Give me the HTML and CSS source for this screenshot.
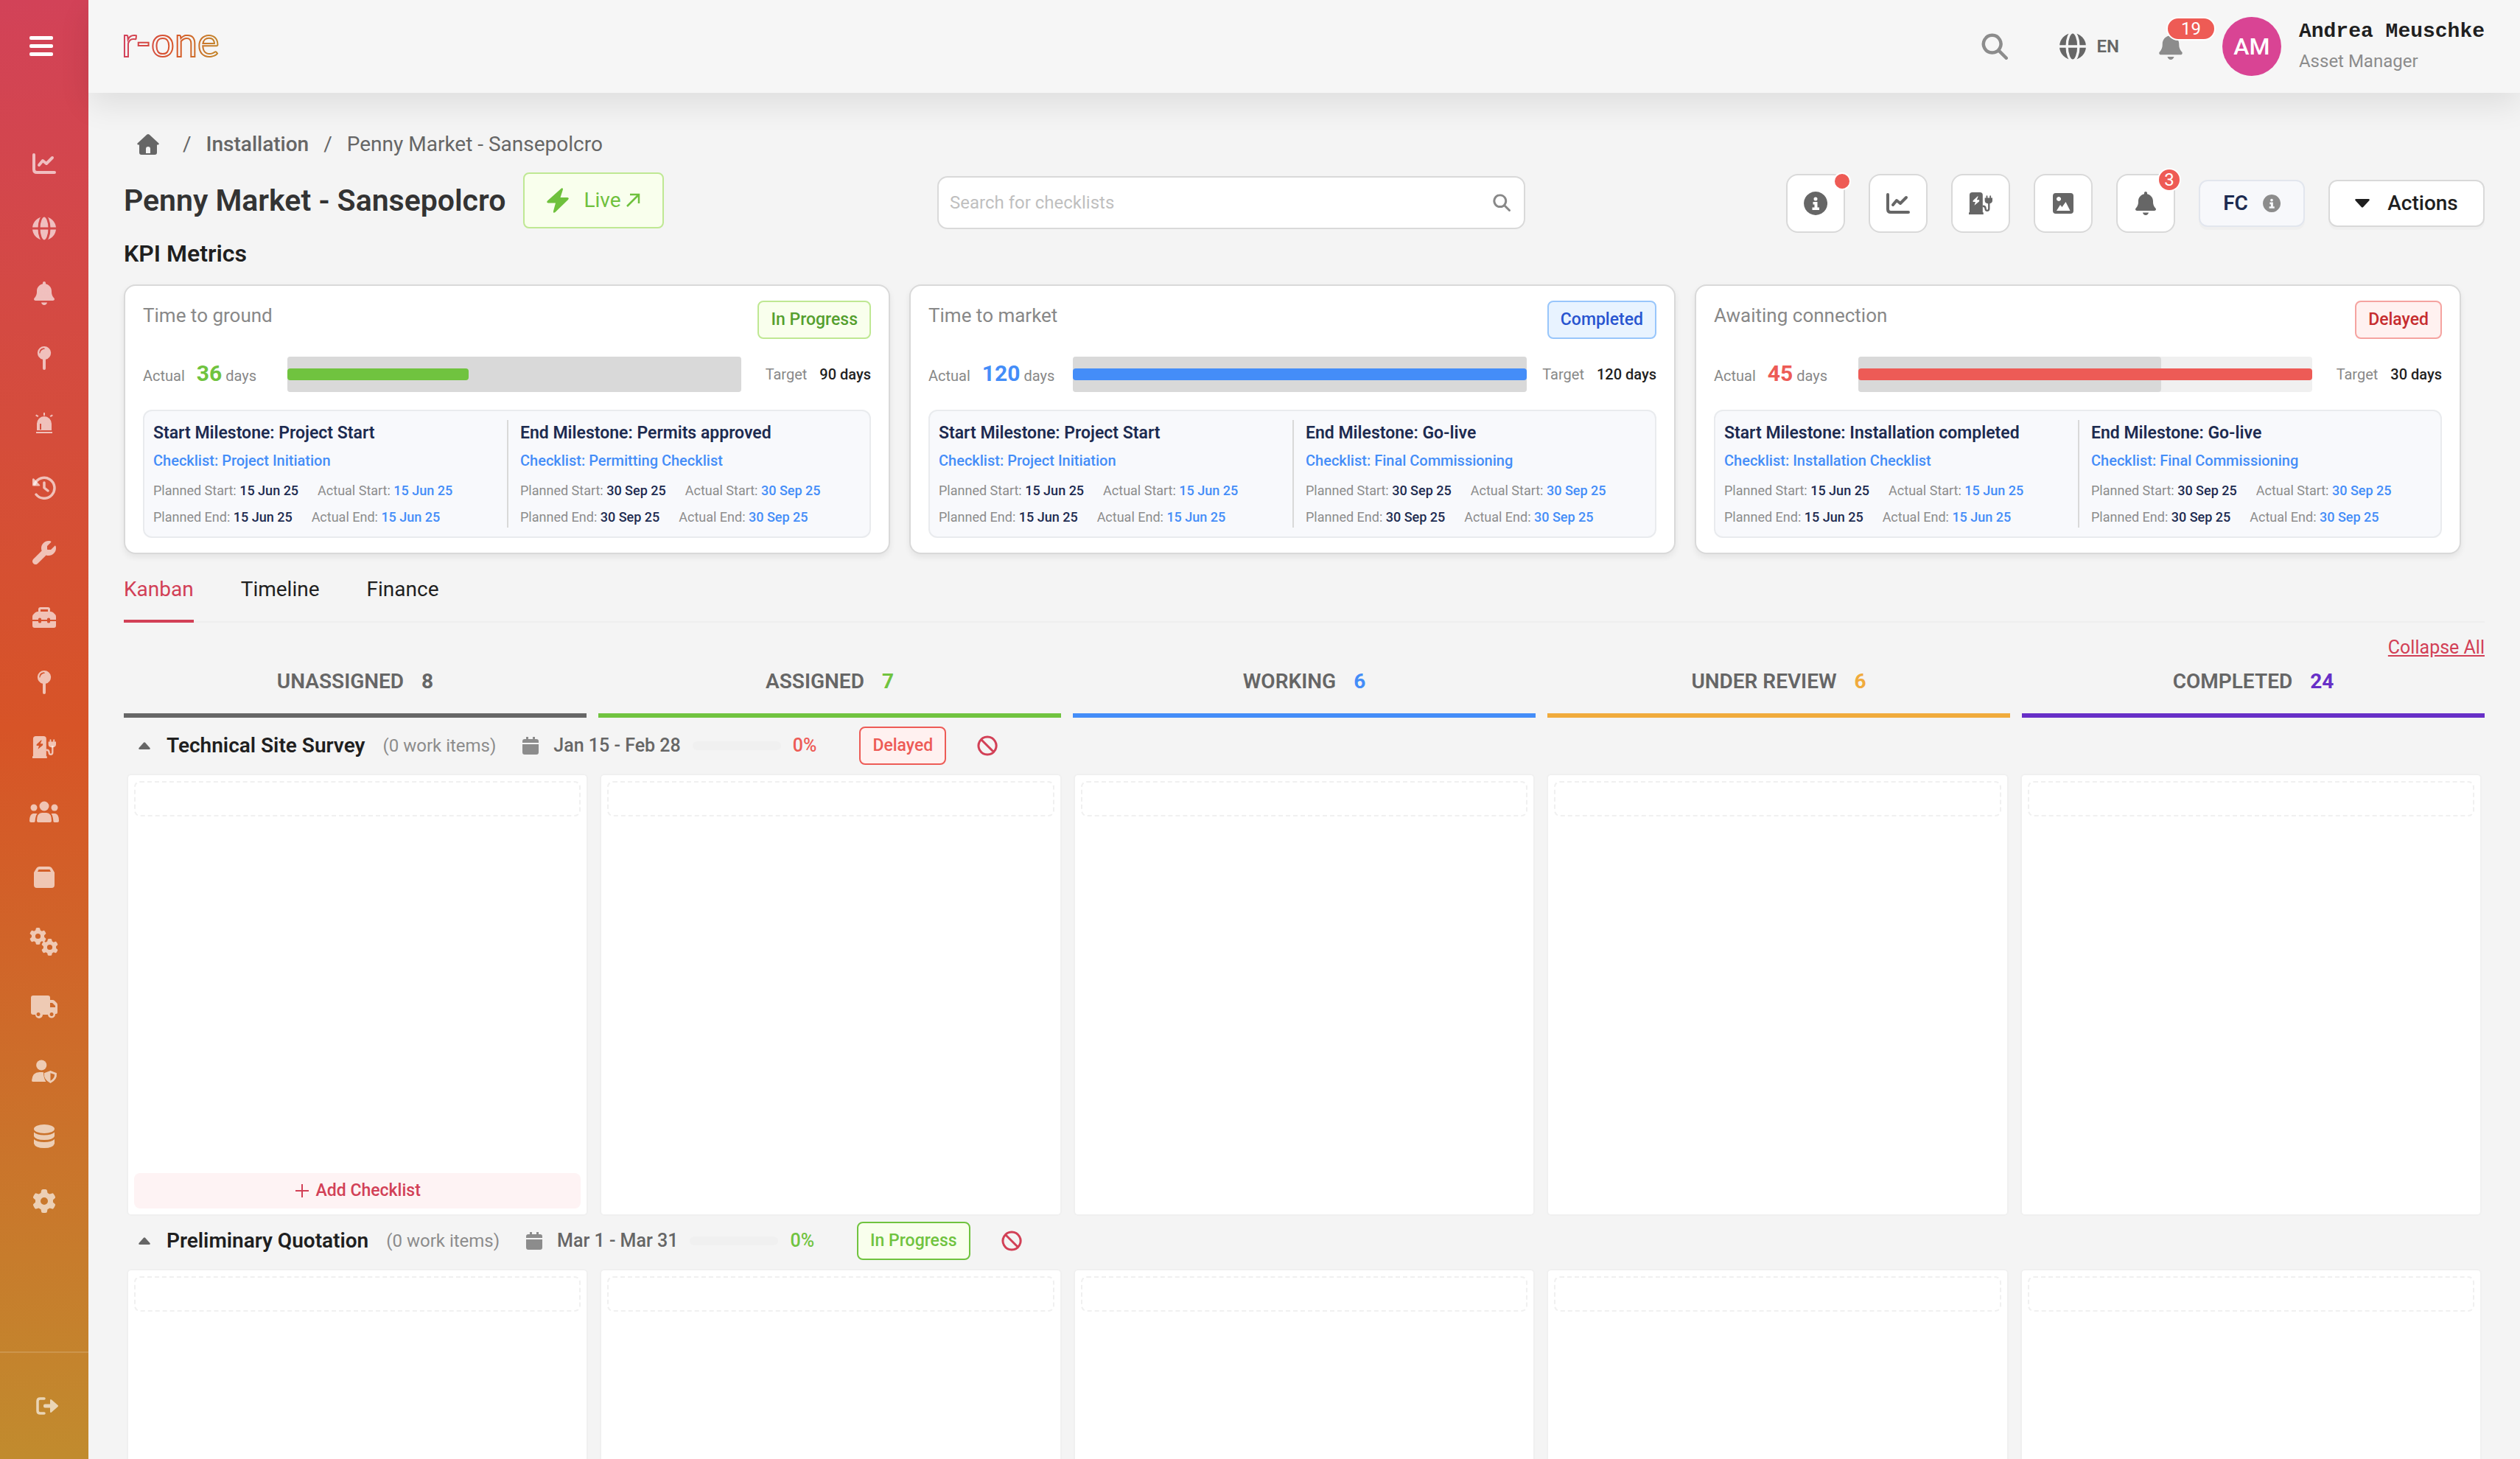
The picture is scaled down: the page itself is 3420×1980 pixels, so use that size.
FILE: index.html
```
<!DOCTYPE html>
<html lang="en">
<head>
  <meta charset="UTF-8">
  <meta name="viewport" content="width=device-width, initial-scale=1.0">
  <title>Penny Market - Sansepolcro</title>
  <link rel="stylesheet" href="styles.css">
</head>
<body>
  <!-- Icon sprite -->
  <svg class="sprite" aria-hidden="true">
    <symbol id="i-chart" viewBox="0 0 32 32">
      <path d="M2 4v20q0 4 4 4h24M9 18l5-6 5 4 8-8" fill="none" stroke="currentColor" stroke-width="4" stroke-linecap="round" stroke-linejoin="round"/>
    </symbol>
    <symbol id="i-globe" viewBox="0 0 32 32">
      <mask id="globe-lines">
        <rect width="32" height="32" fill="#fff"/>
        <ellipse cx="16" cy="16" rx="7" ry="17" fill="none" stroke="#000" stroke-width="3"/>
        <path d="M0 16h32" stroke="#000" stroke-width="3"/>
      </mask>
      <circle cx="16" cy="16" r="16" mask="url(#globe-lines)"/>
    </symbol>
    <symbol id="i-bell" viewBox="0 0 448 512">
      <path d="M224 0c-17.7 0-32 14.3-32 32V51.2C119 66 64 130.6 64 208v18.8c0 47-17.3 92.4-48.5 127.6l-7.4 8.3c-8.4 9.4-10.4 22.9-5.3 34.4S19.4 416 32 416H416c12.6 0 24-7.4 29.2-18.9s3.1-25-5.3-34.4l-7.4-8.3C401.3 319.2 384 273.9 384 226.8V208c0-77.4-55-142-128-156.8V32c0-17.7-14.3-32-32-32zM160 456c8 34 30 56 64 56s56-22 64-56z"/>
    </symbol>
    <symbol id="i-pin" viewBox="0 0 32 32">
      <path fill-rule="evenodd" d="M16 0a9 9 0 0 1 2 17.8V30q0 2-2 2t-2-2V17.800A9 9 0 0 1 16 0zM10.500 9q.8-4.500 6-5.200.8-1.300-1.200-1.500Q9.500 3 9.300 9q.6 1 1.200 0z"/>
    </symbol>
    <symbol id="i-alarm" viewBox="0 0 32 32">
      <path fill-rule="evenodd" d="M6 26V17a10 10 0 0 1 20 0v9zM10 25h2v-8h-2zM5 28h22v2H5zM15 2h2v4h-2zM4 6l1.500-1.500 3 2L7 8zM28 6l-1.500-1.500-3 2L25 8z"/>
    </symbol>
    <symbol id="i-history" viewBox="0 0 32 32">
      <path d="M3 11A14 14 0 1 1 5 25M16 9v7l5 4" fill="none" stroke="currentColor" stroke-width="3.500" stroke-linecap="round" stroke-linejoin="round"/>
      <path d="M0 4.500v8q0 1 1 1h8.500q1.500-.5.500-1.500L2 3.500q-1.600-1-2 1z"/>
    </symbol>
    <symbol id="i-wrench" viewBox="0 0 512 512">
      <path d="M352 320c88.400 0 160-71.600 160-160c0-15.300-2.200-30.100-6.200-44.200c-3.100-10.800-16.400-13.200-24.300-5.300l-76.800 76.800c-3 3-7.100 4.700-11.300 4.700H336c-8.800 0-16-7.200-16-16V118.600c0-4.200 1.700-8.300 4.700-11.300l76.800-76.800c7.900-7.900 5.400-21.200-5.300-24.300C382.100 2.200 367.300 0 352 0C263.600 0 192 71.600 192 160c0 19.100 3.400 37.500 9.500 54.500L19.900 396.100C7.200 408.800 0 426.100 0 444.100C0 481.600 30.400 512 67.900 512c18 0 35.300-7.200 48-19.900L297.500 310.500c17 6.200 35.400 9.500 54.500 9.500z"/>
    </symbol>
    <symbol id="i-toolbox" viewBox="0 0 32 32">
      <path fill-rule="evenodd" d="M8 8V5q0-3 3-3h10q3 0 3 3v3h1q2 0 3.500 1.500L31 12q1 1 1 3v4h-8v-1q0-1.500-2-1.500T20 18v1h-8v-1q0-1.500-2-1.500T8 18v1H0v-4q0-2 1-3l2.500-2.500Q5 8 7 8zM11 8h10V5H11zM0 21h8v1q0 1.500 2 1.500t2-1.500v-1h8v1q0 1.500 2 1.500t2-1.500v-1h8v6q0 3-3 3H3q-3 0-3-3z"/>
    </symbol>
    <symbol id="i-charge" viewBox="0 0 34 32">
      <path fill-rule="evenodd" d="M1 4q0-4 4-4h11q4 0 4 4v25h1v3H0v-3h1zM12.500 6L6 12v2h3.500L8 19l7-6v-2h-3.500L13.500 6z"/>
      <path d="M20 20q4 0 4 3.500 0 3 2.500 3t2.500-3V14" fill="none" stroke="currentColor" stroke-width="2.500"/>
      <path d="M25 5q1-1 2 0v3h3V5q1-1 2 0v3h2v4q0 4-5.500 4.500Q23 16 23 12V8h2z"/>
    </symbol>
    <symbol id="i-users" viewBox="0 0 40 32">
      <circle cx="20" cy="8" r="6.500"/><circle cx="6" cy="10" r="4.500"/><circle cx="34" cy="10" r="4.500"/>
      <path d="M10 28q0-11 7-11h6q7 0 7 11 0 2-2 2H12q-2 0-2-2zM0 28q0-9 5-10h4q1 0 1.500.5Q8 21 7.500 29q0 1-2 1H2q-2 0-2-2zM40 28q0-9-5-10h-4q-1 0-1.500.5 2.500 2.500 3 10.500 0 1 2 1H38q2 0 2-2z"/>
    </symbol>
    <symbol id="i-box" viewBox="0 0 32 32">
      <path fill-rule="evenodd" d="M2 10l3-5q1.500-3 5-3h12q3.500 0 5 3l3 5v17q0 4-4 4H6q-4 0-4-4zM7 9h18l-1.500-3H8.500z"/>
    </symbol>
    <symbol id="i-gear" viewBox="0 0 512 512">
      <path d="M495.900 166.600c3.200 8.700 .5 18.400-6.400 24.600l-43.300 39.400c1.100 8.300 1.700 16.800 1.700 25.400s-.6 17.100-1.700 25.400l43.300 39.400c6.900 6.200 9.600 15.900 6.400 24.600c-4.400 11.900-9.700 23.300-15.800 34.300l-4.700 8.100c-6.600 11-14 21.400-22.100 31.200c-5.900 7.200-15.700 9.600-24.500 6.800l-55.700-17.700c-13.400 10.300-28.200 18.900-44 25.400l-12.500 57.100c-2 9.100-9 16.300-18.200 17.800c-13.800 2.300-28 3.500-42.500 3.500s-28.700-1.200-42.500-3.500c-9.200-1.500-16.200-8.700-18.200-17.800l-12.500-57.100c-15.800-6.500-30.600-15.100-44-25.400L83.100 425.900c-8.800 2.800-18.600 .3-24.500-6.800c-8.100-9.800-15.500-20.200-22.100-31.200l-4.700-8.100c-6.100-11-11.400-22.400-15.800-34.300c-3.200-8.700-.5-18.400 6.400-24.600l43.300-39.400C64.600 273.100 64 264.600 64 256s.6-17.100 1.700-25.400L22.400 191.200c-6.900-6.200-9.600-15.900-6.400-24.600c4.400-11.900 9.700-23.300 15.800-34.300l4.700-8.100c6.600-11 14-21.400 22.100-31.200c5.900-7.200 15.700-9.600 24.500-6.800l55.700 17.700c13.400-10.300 28.200-18.900 44-25.400l12.500-57.100c2-9.100 9-16.300 18.200-17.800C227.300 1.200 241.500 0 256 0s28.700 1.200 42.500 3.500c9.200 1.500 16.200 8.700 18.200 17.800l12.500 57.100c15.800 6.500 30.600 15.100 44 25.400l55.700-17.700c8.800-2.800 18.600-.3 24.500 6.800c8.100 9.800 15.500 20.200 22.100 31.200l4.700 8.100c6.100 11 11.400 22.400 15.800 34.300zM256 336a80 80 0 1 0 0-160 80 80 0 1 0 0 160z"/>
    </symbol>
    <symbol id="i-gears" viewBox="0 0 40 40">
      <use href="#i-gear" x="0" y="1" width="23" height="23"/>
      <use href="#i-gear" x="16" y="16" width="23" height="23"/>
    </symbol>
    <symbol id="i-truck" viewBox="0 0 36 32">
      <path fill-rule="evenodd" d="M0 4q0-3 3-3h20q3 0 3 3v3h3q2 0 3 1l3 3q1 1 1 3v10q0 2-2 2h-1a5 5 0 0 1-10 1h-7a5 5 0 0 1-10 0H3q-3 0-3-3zM26 11v6h7v-2l-4-4zM10 24a2.500 2.500 0 1 0 .1 0zM28 24a2.500 2.500 0 1 0 .1 0z"/>
    </symbol>
    <symbol id="i-usershield" viewBox="0 0 36 34">
      <circle cx="14" cy="8" r="7.500"/>
      <path d="M0 30q1-12 11-12h4q1 0 2 .3 0 8 3.500 13.700H2q-2 0-2-2z"/>
      <path fill-rule="evenodd" d="M27 16l9 3.500q1 10-9 14.500-10-4.500-9-14.500zM27 19.500v11q6-3.500 6-9z"/>
    </symbol>
    <symbol id="i-database" viewBox="0 0 32 32">
      <ellipse cx="16" cy="6" rx="14" ry="6"/>
      <path d="M2 10.500q4 4 14 4t14-4V16q-2 5-14 5T2 16zM2 20q4 4 14 4t14-4v6q-2 6-14 6T2 26z"/>
    </symbol>
    <symbol id="i-logout" viewBox="0 0 32 32">
      <path d="M13 6H7.500Q4 6 4 9.500v13Q4 26 7.500 26H13" fill="none" stroke="currentColor" stroke-width="3.500" stroke-linecap="round"/>
      <path d="M14 13.500h7V8.500q0-2.500 2-1L31.500 15q1 1 0 2L23 24.500q-2 1.500-2-1v-5h-7q-2 0-2-2v-1q0-2 2-2z"/>
    </symbol>
    <symbol id="i-search" viewBox="0 0 32 32">
      <path d="M13 2.500a10.500 10.500 0 1 0 .1 0zM21 21l9 9" fill="none" stroke="currentColor" stroke-width="4" stroke-linecap="round"/>
    </symbol>
    <symbol id="i-home" viewBox="0 0 30 28">
      <path fill-rule="evenodd" d="M13.500.6q1.500-1.200 3 0L29.500 12.500q.8 1.500-1 2H27V25q0 3-3 3H6q-3 0-3-3V14.500H1.500q-1.800-.5-1-2zM12 26h6v-6q0-3-3-3t-3 3z"/>
    </symbol>
    <symbol id="i-bolt" viewBox="0 0 30 34">
      <path d="M20 .5q2-1 2 1.500L18.500 13H28q3 .5 1 3L11.500 33q-3 2-2.500-1.500L12 20.500H2q-3-.5-1-3z"/>
    </symbol>
    <symbol id="i-info" viewBox="0 0 32 32">
      <path fill-rule="evenodd" d="M16 0a16 16 0 1 0 .1 0zM13.500 10a2.500 2.500 0 1 1 5 0 2.500 2.500 0 0 1-5 0zM12.500 14h6v7.500H21V25h-9.500v-3.500h3v-4h-2z"/>
    </symbol>
    <symbol id="i-image" viewBox="0 0 28 28">
      <path fill-rule="evenodd" d="M4 0h20q4 0 4 4v20q0 4-4 4H4q-4 0-4-4V4q0-4 4-4zM8 5a3 3 0 1 0 .1 0zM5 24h18.500l-6-12-5 7-2.500-3z"/>
    </symbol>
    <symbol id="i-calendar" viewBox="0 0 22 24">
      <path d="M0 8V6q0-3 3-3h2V0h3v3h6V0h3v3h2q3 0 3 3v2zM0 10h22v11q0 3-3 3H3q-3 0-3-3z"/>
    </symbol>
    <symbol id="i-ban" viewBox="0 0 28 28">
      <path d="M14 2a12 12 0 1 0 .1 0zM6 6l16 16" fill="none" stroke="currentColor" stroke-width="3"/>
    </symbol>
    <symbol id="i-up" viewBox="0 0 16 10"><path d="M7 .8q1-1 2 0L15.500 8q.8 2-1 2h-13q-1.800 0-1-2z"/></symbol>
    <symbol id="i-down" viewBox="0 0 20 12"><path d="M8.800 11q1.200 1.200 2.400 0L19.500 2q.8-2-1-2h-17q-1.800 0-1 2z"/></symbol>
    <symbol id="i-arrow" viewBox="0 0 20 20"><path d="M2 18L18 2M6 2h12v12" fill="none" stroke="currentColor" stroke-width="2.500"/></symbol>
    <symbol id="i-plus" viewBox="0 0 20 20"><path d="M10 1v18M1 10h18" stroke="currentColor" stroke-width="2"/></symbol>
  </svg>

  <aside class="sidebar">
    <button class="menu-toggle" aria-label="Menu"><span></span><span></span><span></span></button>
    <nav class="side-nav">
      <a href="#"><svg class="icon"><use href="#i-chart"/></svg></a>
      <a href="#"><svg class="icon"><use href="#i-globe"/></svg></a>
      <a href="#"><svg class="icon"><use href="#i-bell"/></svg></a>
      <a href="#"><svg class="icon"><use href="#i-pin"/></svg></a>
      <a href="#"><svg class="icon"><use href="#i-alarm"/></svg></a>
      <a href="#"><svg class="icon"><use href="#i-history"/></svg></a>
      <a href="#"><svg class="icon"><use href="#i-wrench"/></svg></a>
      <a href="#"><svg class="icon"><use href="#i-toolbox"/></svg></a>
      <a href="#"><svg class="icon"><use href="#i-pin"/></svg></a>
      <a href="#"><svg class="icon"><use href="#i-charge"/></svg></a>
      <a href="#"><svg class="icon icon-wide"><use href="#i-users"/></svg></a>
      <a href="#"><svg class="icon"><use href="#i-box"/></svg></a>
      <a href="#"><svg class="icon icon-wide"><use href="#i-gears"/></svg></a>
      <a href="#"><svg class="icon icon-mid"><use href="#i-truck"/></svg></a>
      <a href="#"><svg class="icon icon-mid"><use href="#i-usershield"/></svg></a>
      <a href="#"><svg class="icon"><use href="#i-database"/></svg></a>
      <a href="#"><svg class="icon"><use href="#i-gear"/></svg></a>
    </nav>
    <a class="logout" href="#"><svg class="icon"><use href="#i-logout"/></svg></a>
  </aside>

  <header class="topbar">
    <a class="brand" href="#" aria-label="r-one">
      <svg class="logo" viewBox="0 0 150 72">
        <defs>
          <linearGradient id="logo-grad" gradientUnits="userSpaceOnUse" x1="0" y1="0" x2="134" y2="0">
            <stop offset="0" stop-color="#d2405a"/><stop offset=".5" stop-color="#d8572a"/><stop offset="1" stop-color="#c18b2c"/>
          </linearGradient>
        </defs>
        <text class="logo-text" x="-3" y="50">r-one</text>
      </svg>
    </a>
    <div class="topbar-right">
      <button class="plain search-btn" aria-label="Search"><svg class="icon"><use href="#i-search"/></svg></button>
      <button class="plain lang"><svg class="icon"><use href="#i-globe"/></svg>EN</button>
      <button class="plain notif" aria-label="Notifications">
        <svg class="icon"><use href="#i-bell"/></svg>
        <span class="count-badge">19</span>
      </button>
      <div class="user">
        <div class="avatar">AM</div>
        <div>
          <div class="user-name">Andrea Meuschke</div>
          <div class="user-role">Asset Manager</div>
        </div>
      </div>
    </div>
  </header>

  <main class="content">
    <nav class="breadcrumb">
      <a href="#" aria-label="Home"><svg class="home-icon"><use href="#i-home"/></svg></a>
      <span>/</span>
      <a class="crumb" href="#">Installation</a>
      <span>/</span>
      <span>Penny Market - Sansepolcro</span>
    </nav>

    <div class="title-row">
      <div class="title-left">
        <h1>Penny Market - Sansepolcro</h1>
        <a class="live" href="#"><svg class="bolt"><use href="#i-bolt"/></svg>Live<svg class="arrow"><use href="#i-arrow"/></svg></a>
      </div>
      <label class="search">
        <input type="text" placeholder="Search for checklists" aria-label="Search for checklists">
        <svg><use href="#i-search"/></svg>
      </label>
      <div class="tools">
        <button class="tool" aria-label="Info"><svg><use href="#i-info"/></svg><span class="dot"></span></button>
        <button class="tool" aria-label="Analytics"><svg><use href="#i-chart"/></svg></button>
        <button class="tool" aria-label="Chargers"><svg><use href="#i-charge"/></svg></button>
        <button class="tool" aria-label="Images"><svg class="tool-image"><use href="#i-image"/></svg></button>
        <button class="tool" aria-label="Alerts"><svg><use href="#i-bell"/></svg><span class="count-badge small">3</span></button>
        <button class="fc">FC <svg><use href="#i-info"/></svg></button>
        <button class="actions"><svg><use href="#i-down"/></svg>Actions</button>
      </div>
    </div>

    <h2>KPI Metrics</h2>
    <section class="kpis">
      <article class="kpi green">
        <div class="kpi-head"><h3>Time to ground</h3><span class="tag">In Progress</span></div>
        <div class="kpi-progress">
          <div class="actual">Actual <b>36</b><small>days</small></div>
          <div class="bar"><div class="bar-target" style="width: 100%"></div><div class="bar-actual" style="width: 40%"></div></div>
          <div class="target">Target <b>90 days</b></div>
        </div>
        <div class="milestones">
          <div class="milestone">
            <h4>Start Milestone: Project Start</h4>
            <a href="#">Checklist: Project Initiation</a>
            <p><span>Planned Start: <b>15 Jun 25</b></span><span>Actual Start: <i>15 Jun 25</i></span></p>
            <p><span>Planned End: <b>15 Jun 25</b></span><span>Actual End: <i>15 Jun 25</i></span></p>
          </div>
          <div class="milestone">
            <h4>End Milestone: Permits approved</h4>
            <a href="#">Checklist: Permitting Checklist</a>
            <p><span>Planned Start: <b>30 Sep 25</b></span><span>Actual Start: <i>30 Sep 25</i></span></p>
            <p><span>Planned End: <b>30 Sep 25</b></span><span>Actual End: <i>30 Sep 25</i></span></p>
          </div>
        </div>
      </article>

      <article class="kpi blue">
        <div class="kpi-head"><h3>Time to market</h3><span class="tag">Completed</span></div>
        <div class="kpi-progress">
          <div class="actual">Actual <b>120</b><small>days</small></div>
          <div class="bar"><div class="bar-target" style="width: 100%"></div><div class="bar-actual" style="width: 100%"></div></div>
          <div class="target">Target <b>120 days</b></div>
        </div>
        <div class="milestones">
          <div class="milestone">
            <h4>Start Milestone: Project Start</h4>
            <a href="#">Checklist: Project Initiation</a>
            <p><span>Planned Start: <b>15 Jun 25</b></span><span>Actual Start: <i>15 Jun 25</i></span></p>
            <p><span>Planned End: <b>15 Jun 25</b></span><span>Actual End: <i>15 Jun 25</i></span></p>
          </div>
          <div class="milestone">
            <h4>End Milestone: Go-live</h4>
            <a href="#">Checklist: Final Commissioning</a>
            <p><span>Planned Start: <b>30 Sep 25</b></span><span>Actual Start: <i>30 Sep 25</i></span></p>
            <p><span>Planned End: <b>30 Sep 25</b></span><span>Actual End: <i>30 Sep 25</i></span></p>
          </div>
        </div>
      </article>

      <article class="kpi red">
        <div class="kpi-head"><h3>Awaiting connection</h3><span class="tag">Delayed</span></div>
        <div class="kpi-progress">
          <div class="actual">Actual <b>45</b><small>days</small></div>
          <div class="bar"><div class="bar-target" style="width: 66.67%"></div><div class="bar-actual" style="width: 100%"></div></div>
          <div class="target">Target <b>30 days</b></div>
        </div>
        <div class="milestones">
          <div class="milestone">
            <h4>Start Milestone: Installation completed</h4>
            <a href="#">Checklist: Installation Checklist</a>
            <p><span>Planned Start: <b>15 Jun 25</b></span><span>Actual Start: <i>15 Jun 25</i></span></p>
            <p><span>Planned End: <b>15 Jun 25</b></span><span>Actual End: <i>15 Jun 25</i></span></p>
          </div>
          <div class="milestone">
            <h4>End Milestone: Go-live</h4>
            <a href="#">Checklist: Final Commissioning</a>
            <p><span>Planned Start: <b>30 Sep 25</b></span><span>Actual Start: <i>30 Sep 25</i></span></p>
            <p><span>Planned End: <b>30 Sep 25</b></span><span>Actual End: <i>30 Sep 25</i></span></p>
          </div>
        </div>
      </article>
    </section>

    <div class="tabs">
      <button class="tab active">Kanban</button>
      <button class="tab">Timeline</button>
      <button class="tab">Finance</button>
    </div>

    <div class="collapse"><a href="#">Collapse All</a></div>

    <div class="columns">
      <div class="column-head unassigned">UNASSIGNED <b>8</b></div>
      <div class="column-head assigned">ASSIGNED <b>7</b></div>
      <div class="column-head working">WORKING <b>6</b></div>
      <div class="column-head review">UNDER REVIEW <b>6</b></div>
      <div class="column-head completed">COMPLETED <b>24</b></div>
    </div>

    <section class="phase">
      <div class="phase-head red">
        <button class="plain caret" aria-label="Collapse"><svg><use href="#i-up"/></svg></button>
        <h3>Technical Site Survey</h3>
        <span class="items">(0 work items)</span>
        <svg class="calendar"><use href="#i-calendar"/></svg>
        <span class="dates">Jan 15 - Feb 28</span>
        <div class="phase-bar"></div>
        <span class="percent">0%</span>
        <span class="tag">Delayed</span>
        <button class="plain ban" aria-label="Block"><svg><use href="#i-ban"/></svg></button>
      </div>
      <div class="lanes">
        <div class="lane"><div class="slot"></div><button class="add"><svg><use href="#i-plus"/></svg>Add Checklist</button></div>
        <div class="lane"><div class="slot"></div></div>
        <div class="lane"><div class="slot"></div></div>
        <div class="lane"><div class="slot"></div></div>
        <div class="lane"><div class="slot"></div></div>
      </div>
    </section>

    <section class="phase">
      <div class="phase-head green">
        <button class="plain caret" aria-label="Collapse"><svg><use href="#i-up"/></svg></button>
        <h3>Preliminary Quotation</h3>
        <span class="items">(0 work items)</span>
        <svg class="calendar"><use href="#i-calendar"/></svg>
        <span class="dates">Mar 1 - Mar 31</span>
        <div class="phase-bar"></div>
        <span class="percent">0%</span>
        <span class="tag">In Progress</span>
        <button class="plain ban" aria-label="Block"><svg><use href="#i-ban"/></svg></button>
      </div>
      <div class="lanes">
        <div class="lane"><div class="slot"></div></div>
        <div class="lane"><div class="slot"></div></div>
        <div class="lane"><div class="slot"></div></div>
        <div class="lane"><div class="slot"></div></div>
        <div class="lane"><div class="slot"></div></div>
      </div>
    </section>
  </main>
</body>
</html>
```
FILE: styles.css
```
* {
  margin: 0;
  padding: 0;
  box-sizing: border-box;
}

body {
  display: grid;
  grid-template-columns: 120px 1fr;
  grid-template-rows: 126px 1fr;
  height: 100vh;
  overflow: hidden;
  background: #f4f4f4;
  color: #1f1f1f;
  font-family: Roboto, "Noto Sans", sans-serif;
  font-size: 28px;
  line-height: 40px;
}

a {
  color: inherit;
  text-decoration: none;
}

button,
input {
  font: inherit;
  color: inherit;
}

button {
  cursor: pointer;
}

svg {
  flex-shrink: 0;
  fill: currentColor;
}

.sprite {
  position: absolute;
  width: 0;
  height: 0;
}

.plain {
  display: flex;
  align-items: center;
  background: none;
  border: none;
}

/* Sidebar */
.sidebar {
  grid-row: 1 / 3;
  display: flex;
  flex-direction: column;
  background: linear-gradient(180deg, #d24258 0%, #d75427 50%, #c18b2e 100%);
  color: rgba(255, 255, 255, 0.65);
}

.menu-toggle {
  display: flex;
  flex-direction: column;
  align-items: center;
  justify-content: center;
  gap: 6px;
  height: 124px;
  padding-right: 8px;
  background: none;
  border: none;
}

.menu-toggle span {
  width: 32px;
  height: 5px;
  border-radius: 2px;
  background: #fff;
}

.side-nav {
  flex: 1;
  margin-top: 54px;
}

.side-nav a {
  display: flex;
  align-items: center;
  justify-content: center;
  height: 88px;
}

.icon {
  width: 32px;
  height: 32px;
}

.icon-mid {
  width: 36px;
}

.icon-wide {
  width: 40px;
  height: 40px;
}

.logout {
  display: flex;
  align-items: center;
  justify-content: center;
  height: 146px;
  padding-left: 6px;
  border-top: 2px solid rgba(255, 255, 255, 0.15);
}

/* Top bar */
.topbar {
  z-index: 2;
  display: flex;
  align-items: center;
  justify-content: space-between;
  padding: 0 48px;
  background: #f6f6f6;
  box-shadow: 0 16px 40px rgba(0, 0, 0, 0.09);
}

.brand {
  display: flex;
}

.logo {
  width: 150px;
  height: 72px;
  overflow: visible;
}

.logo-text {
  font-family: Lato, sans-serif;
  font-size: 56px;
  fill: none;
  stroke: url(#logo-grad);
  stroke-width: 2px;
}

.topbar-right {
  display: flex;
  align-items: center;
  color: #8c8c8c;
}

.topbar-right .icon {
  width: 36px;
  height: 36px;
}

.lang {
  gap: 14px;
  margin-left: 70px;
  color: #666;
  font-size: 24px;
  font-weight: 600;
}

.notif {
  position: relative;
  margin-left: 52px;
}

.count-badge {
  position: absolute;
  left: 12px;
  top: -22px;
  height: 32px;
  padding: 0 18px;
  border: 2px solid #fff;
  border-radius: 16px;
  background: #ee5b55;
  color: #fff;
  font-size: 24px;
  line-height: 28px;
}

.user {
  display: flex;
  align-items: center;
  gap: 24px;
  margin-left: 52px;
}

.avatar {
  width: 80px;
  height: 80px;
  border-radius: 50%;
  background: #d94494;
  color: #fff;
  font-size: 32px;
  font-weight: 500;
  line-height: 80px;
  text-align: center;
}

.user-name {
  color: #1f1f1f;
  font-family: "Liberation Mono", monospace;
  font-weight: 700;
}

.user-role {
  font-size: 24px;
}

/* Page */
.content {
  min-width: 0;
  padding: 50px 48px 0;
  overflow-y: auto;
  scrollbar-width: none;
}

.breadcrumb {
  display: flex;
  align-items: center;
  gap: 20px;
  padding-left: 18px;
  color: #666;
}

.breadcrumb a {
  display: flex;
}

.breadcrumb a:first-child {
  padding-right: 12px;
}

.home-icon {
  width: 30px;
  height: 28px;
}

.crumb {
  font-weight: 500;
}

.title-row {
  display: grid;
  grid-template-columns: 1104fr 798fr 1302fr;
  align-items: center;
  min-height: 82px;
  margin-top: 18px;
}

.title-left {
  display: flex;
  align-items: center;
  align-self: start;
  gap: 24px;
}

h1 {
  color: #333;
  font-size: 41px;
  font-weight: 600;
}

.live {
  display: flex;
  align-items: center;
  height: 76px;
  padding: 0 30px;
  border: 2px solid #bfe893;
  border-radius: 8px;
  background: #f9ffed;
  color: #6fc13d;
}

.bolt {
  width: 30px;
  height: 34px;
  margin-right: 20px;
}

.arrow {
  width: 20px;
  height: 20px;
  margin-left: 6px;
}

.search {
  display: flex;
  align-items: center;
  height: 72px;
  padding: 0 18px 0 15px;
  border: 2px solid #d9d9d9;
  border-radius: 14px;
  background: #fff;
  color: #888;
  font-size: 24px;
}

.search input {
  flex: 1;
  border: none;
  outline: none;
  background: none;
}

.search input::placeholder {
  color: #bfbfbf;
}

.search svg {
  width: 24px;
  height: 24px;
}

.tools {
  display: flex;
  align-items: center;
  justify-content: flex-end;
  align-self: end;
  gap: 32px;
}

.tool {
  position: relative;
  display: flex;
  align-items: center;
  justify-content: center;
  width: 80px;
  height: 80px;
  border: 2px solid #d9d9d9;
  border-radius: 16px;
  background: #fff;
  color: #666;
}

.tool svg {
  width: 32px;
  height: 32px;
}

.tool .tool-image {
  width: 28px;
  height: 28px;
}

.dot {
  position: absolute;
  right: -10px;
  top: -4px;
  width: 24px;
  height: 24px;
  border: 2px solid #fff;
  border-radius: 50%;
  background: #ee5b55;
}

.count-badge.small {
  left: 54px;
  top: -10px;
  width: 32px;
  padding: 0;
  text-align: center;
}

.fc,
.actions {
  display: flex;
  align-items: center;
  justify-content: center;
  height: 64px;
  border: 2px solid #d9d9d9;
  border-radius: 12px;
  background: #fff;
  box-shadow: 0 4px 0 rgba(0, 0, 0, 0.02);
  font-weight: 500;
}

.fc {
  gap: 20px;
  width: 144px;
  border-color: #e2e6ee;
  background: #f7f8fb;
  color: #1d2b50;
  font-weight: 600;
}

.fc svg {
  width: 24px;
  height: 24px;
  color: #8c8c8c;
}

.actions {
  gap: 24px;
  width: 212px;
}

.actions svg {
  width: 20px;
  height: 12px;
}

h2 {
  margin: 8px 0 22px;
  font-size: 32px;
  font-weight: 600;
}

/* KPI cards */
.green {
  --main: #70c33f;
  --tag-text: #559f2f;
  --tag-bg: #f9ffed;
  --tag-border: #bfe893;
}

.blue {
  --main: #448df8;
  --tag-text: #2855d0;
  --tag-bg: #e8f3ff;
  --tag-border: #98c6fb;
}

.red {
  --main: #ed5b56;
  --tag-text: #c62d2f;
  --tag-bg: #fff1f0;
  --tag-border: #f5a3a0;
}

.kpis {
  display: grid;
  grid-template-columns: repeat(3, 1fr);
  gap: 26px;
  padding-right: 32px;
}

.kpi {
  padding: 20px 24px;
  border: 2px solid #d9d9d9;
  border-radius: 16px;
  background: #fff;
  box-shadow: 0 4px 8px rgba(0, 0, 0, 0.07);
}

.kpi-head {
  display: flex;
  align-items: flex-start;
  justify-content: space-between;
}

.kpi-head h3 {
  color: #888;
  font-size: 26px;
  font-weight: 400;
}

.tag {
  height: 52px;
  padding: 0 16px;
  border: 2px solid var(--tag-border);
  border-radius: 8px;
  background: var(--tag-bg);
  color: var(--tag-text);
  font-size: 23px;
  font-weight: 500;
  line-height: 48px;
}

.kpi-progress {
  display: grid;
  grid-template-columns: 196px 1fr 176px;
  align-items: center;
  margin: 24px 0;
  color: #888;
  font-size: 20px;
}

.actual {
  display: flex;
  align-items: baseline;
}

.actual b {
  margin: 0 5px 0 16px;
  color: var(--main);
  font-size: 30px;
}

.actual small {
  font-size: 20px;
}

.bar {
  display: grid;
  align-items: center;
  height: 48px;
  border-radius: 4px;
  background: #f0f0f0;
}

.bar-target,
.bar-actual {
  grid-area: 1 / 1;
  height: 48px;
  border-radius: 4px;
  background: #d9d9d9;
}

.bar-actual {
  height: 16px;
  background: var(--main);
}

.target {
  text-align: right;
}

.target b {
  margin-left: 12px;
  color: #1f1f1f;
  font-weight: 500;
}

.milestones {
  display: grid;
  grid-template-columns: 1fr 1fr;
  padding: 12px;
  border: 2px solid #e9ebee;
  border-radius: 12px;
  background: #f8f9fc;
}

.milestone {
  padding: 4px 0 2px;
}

.milestone + .milestone {
  padding-left: 16px;
  border-left: 2px solid #d9d9d9;
}

.milestone h4 {
  color: #1d2b50;
  font-size: 23px;
  font-weight: 600;
  line-height: 28px;
}

.milestone a {
  display: block;
  margin: 10px 0 16px;
  color: #448df8;
  font-size: 20px;
  font-weight: 500;
  line-height: 26px;
}

.milestone p {
  display: flex;
  gap: 26px;
  color: #8c8c8c;
  font-size: 18px;
  line-height: 24px;
}

.milestone p + p {
  margin-top: 12px;
}

.milestone b {
  color: #1d2b50;
  font-weight: 500;
}

.milestone i {
  color: #448df8;
  font-style: normal;
  font-weight: 500;
}

/* Tabs */
.tabs {
  display: flex;
  gap: 64px;
  margin-top: 28px;
  border-bottom: 2px solid #eee;
}

.tab {
  margin-bottom: -2px;
  padding-bottom: 21px;
  border: none;
  border-bottom: 4px solid transparent;
  background: none;
}

.tab.active {
  border-color: #d24056;
  color: #d24056;
}

.collapse {
  margin-top: 18px;
  color: #d24056;
  font-size: 25px;
  line-height: 32px;
  text-align: right;
}

.collapse a {
  text-decoration: underline;
}

/* Kanban */
.columns {
  display: grid;
  grid-template-columns: repeat(5, 1fr);
  gap: 16px;
  margin-top: 10px;
}

.column-head {
  display: flex;
  justify-content: center;
  gap: 24px;
  padding-bottom: 23px;
  border-bottom: 6px solid #666;
  color: #666;
  font-weight: 600;
}

.column-head b {
  font-weight: 700;
}

.assigned {
  border-color: #70c33f;
}

.assigned b {
  color: #70c33f;
}

.working {
  border-color: #448df8;
}

.working b {
  color: #448df8;
}

.review {
  border-color: #f0ab3c;
}

.review b {
  color: #f0ab3c;
}

.completed {
  border-color: #672fc7;
}

.completed b {
  color: #672fc7;
}

.columns + .phase {
  padding-top: 4px;
}

.phase-head {
  display: flex;
  align-items: center;
  height: 72px;
  padding: 0 20px 4px;
}

.caret {
  margin-right: 22px;
  color: #666;
}

.caret svg {
  width: 16px;
  height: 10px;
}

.phase-head h3 {
  font-size: 28px;
  font-weight: 600;
}

.items {
  margin-left: 24px;
  color: #8c8c8c;
  font-size: 24px;
}

.calendar {
  width: 22px;
  height: 24px;
  margin: 0 20px 0 36px;
  color: #8c8c8c;
}

.dates {
  color: #666;
  font-size: 25px;
  font-weight: 500;
}

.phase-bar {
  width: 120px;
  height: 12px;
  margin: 0 16px;
  border-radius: 6px;
  background: #f0f0f0;
}

.percent {
  color: var(--main);
  font-size: 25px;
  font-weight: 500;
}

.phase-head .tag {
  margin: 0 42px 0 58px;
  border-color: var(--main);
  color: var(--main);
}

.ban {
  color: #d24056;
}

.ban svg {
  width: 28px;
  height: 28px;
}

.lanes {
  display: grid;
  grid-template-columns: repeat(5, 1fr);
  gap: 16px;
  padding: 0 4px;
}

.lane {
  display: flex;
  flex-direction: column;
  justify-content: space-between;
  height: 600px;
  padding: 8px;
  border: 2px solid #f0f0f0;
  border-radius: 6px;
  background: #fff;
}

.slot {
  height: 48px;
  border: 2px dashed #f0f0f0;
  border-radius: 8px;
}

.add {
  display: flex;
  align-items: center;
  justify-content: center;
  gap: 9px;
  height: 48px;
  border: none;
  border-radius: 8px;
  background: #fef3f4;
  color: #d24056;
  font-size: 23px;
  font-weight: 500;
}

.add svg {
  width: 20px;
  height: 20px;
}
```
